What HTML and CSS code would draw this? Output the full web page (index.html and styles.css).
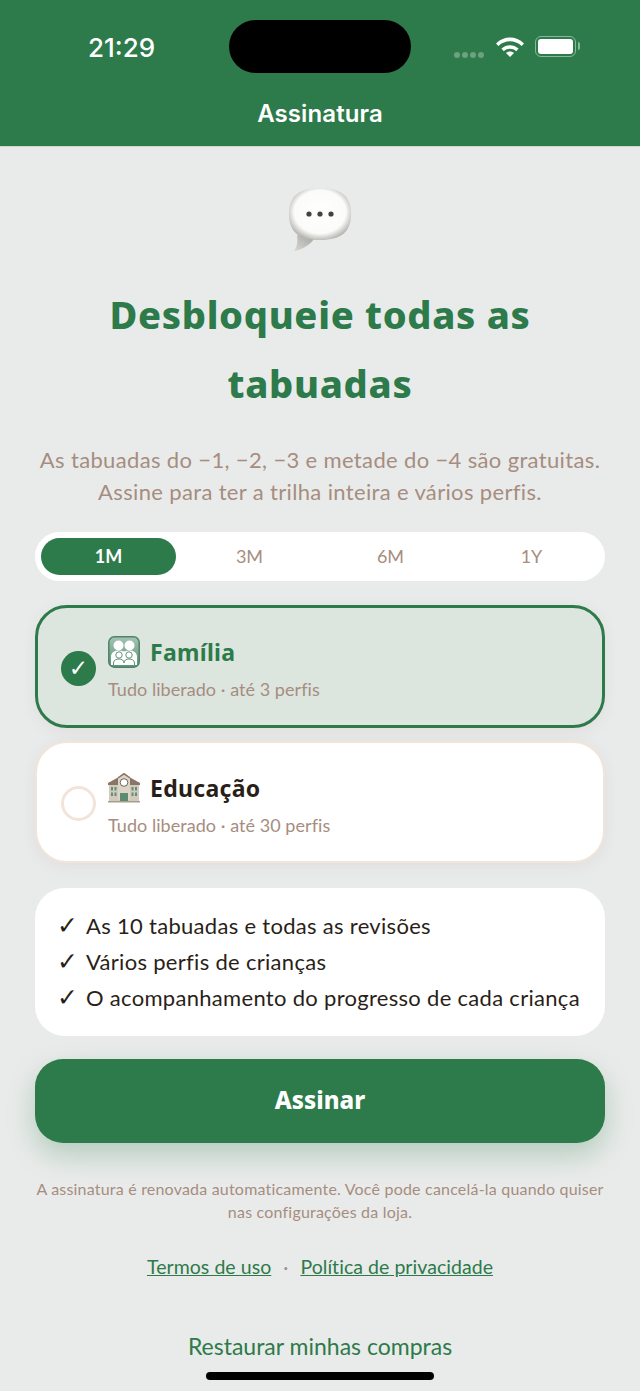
FILE: index.html
```html
<!DOCTYPE html>
<html lang="pt-BR">
<head>
    <meta charset="UTF-8">
    <meta name="viewport" content="width=device-width, initial-scale=1.0">
    <title>Assinatura</title>
    <link rel="stylesheet" href="styles.css">
</head>
<body>
    <header class="topbar">
        <div class="status">
            <span class="clock">21:29</span>
            <span class="island"></span>
            <div class="status-icons">
                <span class="signal"><i></i><i></i><i></i><i></i></span>
                <svg class="wifi" width="28" height="21" viewBox="0 0 28 21">
                    <path d="M0 7.400 C8 -.4 20 -.4 28 7.400 L25.600 10 C18.800 3.800 9.200 3.800 2.400 10 Z" fill="#fff"/>
                    <path d="M5.400 12.600 C10.400 8 17.600 8 22.600 12.600 L20.200 15.200 C16.400 12 11.600 12 7.800 15.200 Z" fill="#fff"/>
                    <path d="M10 17 C12.400 15 15.600 15 18 17 L14 21 Z" fill="#fff"/>
                </svg>
                <span class="battery"><span class="battery-fill"></span></span>
            </div>
        </div>
        <div class="page-title">Assinatura</div>
    </header>

    <main class="content">
        <svg class="bubble" width="66" height="66" viewBox="0 0 66 66">
            <defs>
                <radialGradient id="bubbleFill" cx="50%" cy="46%" r="56%">
                    <stop offset="0" stop-color="#fff"/>
                    <stop offset=".74" stop-color="#fbfbfa"/>
                    <stop offset="1" stop-color="#b4b3ae"/>
                </radialGradient>
                <linearGradient id="tailFill" x1="0" y1="1" x2="1" y2="0">
                    <stop offset="0" stop-color="#d8d7d3"/>
                    <stop offset="1" stop-color="#a4a39f"/>
                </linearGradient>
            </defs>
            <path d="M10 48 C11 55 10 60 7 64 C14 63 22 59 27 52 Z" fill="url(#tailFill)"/>
            <path d="M33 1 C55 1 64 10 64 27 C64 44 55 53 33 53 C11 53 2 44 2 27 C2 10 11 1 33 1 Z" fill="url(#bubbleFill)"/>
            <circle cx="22" cy="27" r="2.600" fill="#45413f"/>
            <circle cx="33" cy="27" r="2.600" fill="#45413f"/>
            <circle cx="44" cy="27" r="2.600" fill="#45413f"/>
        </svg>

        <h1>Desbloqueie todas as tabuadas</h1>
        <p class="subtitle">As tabuadas do −1, −2, −3 e metade do −4 são gratuitas. Assine para ter a trilha inteira e vários perfis.</p>

        <div class="periods">
            <span class="period active">1M</span>
            <span class="period">3M</span>
            <span class="period">6M</span>
            <span class="period">1Y</span>
        </div>

        <div class="plan selected">
            <span class="radio">✓</span>
            <div>
                <div class="plan-name">
                    <svg class="plan-icon" width="32" height="32" viewBox="0 0 32 32">
                        <defs>
                            <linearGradient id="familyFill" x1="0" y1="0" x2="0" y2="1">
                                <stop offset="0" stop-color="#a3c4b1"/>
                                <stop offset="1" stop-color="#5f9478"/>
                            </linearGradient>
                        </defs>
                        <rect x=".8" y=".8" width="30.400" height="30.400" rx="5.500" fill="url(#familyFill)" stroke="#4f8268" stroke-width="1.500"/>
                        <circle cx="10.500" cy="9.500" r="5" fill="#fff"/>
                        <circle cx="21.500" cy="9.500" r="5" fill="#fff"/>
                        <path d="M3 29 V21 C3 16 7 14.500 10.500 14.500 C13 14.500 16 15.500 16 15.500 C16 15.500 19 14.500 21.500 14.500 C25 14.500 29 16 29 21 V29 Z" fill="#fff"/>
                        <circle cx="11" cy="19" r="3.200" fill="#fff" stroke="#5f9478"/>
                        <circle cx="21" cy="19" r="3.200" fill="#fff" stroke="#5f9478"/>
                        <path d="M5.500 29 V27 C5.500 24 8.500 23 11 23 C13.500 23 16 24 16 27 C16 24 18.500 23 21 23 C23.500 23 26.500 24 26.500 27 V29" fill="#fff" stroke="#5f9478"/>
                    </svg>
                    <span>Família</span>
                </div>
                <div class="plan-desc">Tudo liberado · até 3 perfis</div>
            </div>
        </div>

        <div class="plan">
            <span class="radio"></span>
            <div>
                <div class="plan-name">
                    <svg class="plan-icon" width="32" height="32" viewBox="0 0 32 32">
                        <rect x="1" y="10" width="30" height="19" fill="#d3cabb"/>
                        <path d="M0 11 L9 6 H23 L32 11 V13 H0 Z" fill="#8a7566"/>
                        <path d="M10 28 V5 L16 1 L22 5 V28 Z" fill="#dcd4c6"/>
                        <path d="M9.500 5.500 L16 .8 L22.500 5.500 V7 L16 2.800 L9.500 7 Z" fill="#8a7566"/>
                        <circle cx="16" cy="10.500" r="3.800" fill="#fff" stroke="#6d6a63"/>
                        <rect x="12" y="21" width="8" height="8" fill="#5d8a72"/>
                        <g fill="#5f8f78">
                            <rect x="3" y="15" width="2" height="3.500"/><rect x="6.500" y="15" width="2" height="3.500"/>
                            <rect x="3" y="20.500" width="2" height="3.500"/><rect x="6.500" y="20.500" width="2" height="3.500"/>
                            <rect x="23.500" y="15" width="2" height="3.500"/><rect x="27" y="15" width="2" height="3.500"/>
                            <rect x="23.500" y="20.500" width="2" height="3.500"/><rect x="27" y="20.500" width="2" height="3.500"/>
                        </g>
                        <rect x="0" y="29" width="32" height="1.500" fill="#a89e8e"/>
                    </svg>
                    <span>Educação</span>
                </div>
                <div class="plan-desc">Tudo liberado · até 30 perfis</div>
            </div>
        </div>

        <ul class="features">
            <li><span class="tick">✓</span>As 10 tabuadas e todas as revisões</li>
            <li><span class="tick">✓</span>Vários perfis de crianças</li>
            <li><span class="tick">✓</span>O acompanhamento do progresso de cada criança</li>
        </ul>

        <button class="subscribe"><span class="subscribe-label">Assinar</span></button>

        <p class="legal">A assinatura é renovada automaticamente. Você pode cancelá-la quando quiser nas configurações da loja.</p>

        <div class="links">
            <a href="#">Termos de uso</a>
            <span class="dot">·</span>
            <a href="#">Política de privacidade</a>
        </div>

        <a class="restore" href="#">Restaurar minhas compras</a>
    </main>

    <div class="home-bar"></div>
</body>
</html>
```

FILE: styles.css
```css
* {
    box-sizing: border-box;
}
html, body {
    height: 100%;
}
body {
    margin: 0;
    position: relative;
    overflow: hidden;
    background-color: #e9ebea;
    font-family: 'Lato', 'Noto Sans', sans-serif;
    color: #2a1f18;
}
.topbar {
    height: 147px;
    background-color: #2d7a4a;
    border-bottom: 1px solid #d3d6d4;
    color: #fff;
}
.status {
    display: flex;
    align-items: flex-start;
    height: 73px;
    padding-top: 20px;
    padding-left: 88px;
}
.clock {
    width: 141px;
    font-family: 'Inter', sans-serif;
    font-size: 26px;
    font-weight: 500;
    line-height: 55px;
}
.island {
    width: 182px;
    height: 53px;
    border-radius: 27px;
    background-color: #000;
}
.status-icons {
    display: flex;
    align-items: center;
    height: 53px;
    margin-left: 43px;
}
.signal {
    display: flex;
    gap: 2px;
    margin-top: 16px;
    margin-right: 12px;
}
.signal i {
    width: 6px;
    height: 6px;
    border-radius: 50%;
    background-color: rgba(255, 255, 255, 0.3);
}
.wifi {
    margin-right: 11px;
}
.battery {
    position: relative;
    display: block;
    width: 41px;
    height: 21px;
    padding: 2px;
    border: 1.5px solid rgba(255, 255, 255, 0.45);
    border-radius: 6px;
}
.battery::after {
    content: '';
    position: absolute;
    right: -5px;
    top: 5px;
    width: 2px;
    height: 8px;
    border-radius: 0 2px 2px 0;
    background-color: rgba(255, 255, 255, 0.45);
}
.battery-fill {
    display: block;
    height: 100%;
    border-radius: 3px;
    background-color: #fff;
}
.page-title {
    margin-top: 24px;
    text-align: center;
    font-family: 'Inter', sans-serif;
    font-size: 24px;
    font-weight: 600;
    line-height: 34px;
    letter-spacing: 0.1px;
}
.content {
    display: flex;
    flex-direction: column;
    padding: 40px 35px 0;
}
.bubble {
    align-self: center;
    margin-bottom: 27px;
    width: 66px;
    height: 66px;
}
h1 {
    margin: 0;
    text-align: center;
    color: #2d7a4a;
    font-family: 'Noto Sans', sans-serif;
    font-size: 38px;
    font-weight: 800;
    line-height: 69px;
    letter-spacing: 0.7px;
}
.subtitle {
    margin: 26px 0 24px;
    text-align: center;
    color: #a68d80;
    font-size: 22px;
    line-height: 32px;
    letter-spacing: 0.35px;
}
.periods {
    display: flex;
    height: 49px;
    padding: 6px;
    border-radius: 25px;
    background-color: #fff;
    gap: 6px;
}
.period {
    flex: 1;
    text-align: center;
    color: #a68d80;
    font-size: 18px;
    line-height: 37px;
    border-radius: 19px;
}
.period.active {
    background-color: #2d7a4a;
    color: #fff;
    font-weight: 700;
}
.plan {
    display: flex;
    align-items: center;
    gap: 12px;
    height: 122px;
    margin-top: 13px;
    padding: 0 24px;
    background-color: #fff;
    border: 2px solid #f3e4da;
    border-radius: 32px;
    box-shadow: 0 4px 16px rgba(60, 40, 30, 0.06);
    flex: none;
}
.plan.selected {
    height: 123px;
    margin-top: 24px;
    padding: 0 23px;
    background-color: #dde5df;
    border: 3px solid #2d7a4a;
}
.radio {
    display: flex;
    align-items: center;
    justify-content: center;
    flex: none;
    width: 35px;
    height: 35px;
    margin-top: 3px;
    border: 3px solid #f3e4da;
    border-radius: 50%;
    color: #fff;
    font-family: 'DejaVu Sans', sans-serif;
    font-size: 23px;
}
.selected .radio {
    border: none;
    background-color: #2d7a4a;
}
.plan-name {
    display: flex;
    align-items: center;
    gap: 10px;
    padding-top: 3px;
    font-family: 'Noto Sans', sans-serif;
    font-size: 23px;
    font-weight: 700;
    line-height: 34px;
    letter-spacing: 0.3px;
}
.selected .plan-name {
    color: #2d7a4a;
}
.plan-desc {
    margin-top: 8px;
    color: #a68d80;
    font-size: 18px;
    line-height: 24px;
    letter-spacing: 0.05px;
}
.features {
    height: 148px;
    margin: 25px 0 0;
    padding: 20px 22px;
    list-style: none;
    background-color: #fff;
    border-radius: 30px;
    font-size: 22px;
    line-height: 36px;
    letter-spacing: 0.3px;
    flex: none;
}
.tick {
    display: inline-block;
    width: 29px;
    font-family: 'DejaVu Sans', sans-serif;
    font-size: 25px;
    line-height: 1;
    letter-spacing: 0;
}
.subscribe {
    height: 84px;
    margin-top: 23px;
    border: none;
    border-radius: 28px;
    background-color: #2d7a4a;
    box-shadow: 0 12px 28px rgba(45, 122, 74, 0.28);
    color: #fff;
    font-family: 'Noto Sans', sans-serif;
    font-size: 24px;
    font-weight: 800;
    flex: none;
}
.subscribe-label {
    display: block;
    margin-top: -3px;
}
.legal {
    margin: 34px 0 0;
    text-align: center;
    color: #a68d80;
    font-size: 16px;
    line-height: 23px;
    letter-spacing: 0.2px;
}
.links {
    display: flex;
    justify-content: center;
    gap: 12px;
    margin-top: 30px;
    font-size: 19.500px;
    line-height: 28px;
    letter-spacing: 0.05px;
}
.links a {
    color: #2d7a4a;
}
.dot {
    color: #a68d80;
}
.restore {
    margin-top: 49px;
    text-align: center;
    color: #2d7a4a;
    font-size: 23px;
    line-height: 32px;
    text-decoration: none;
}
.home-bar {
    position: absolute;
    left: 206px;
    bottom: 11px;
    width: 228px;
    height: 8px;
    border-radius: 4px;
    background-color: #000;
}
```
